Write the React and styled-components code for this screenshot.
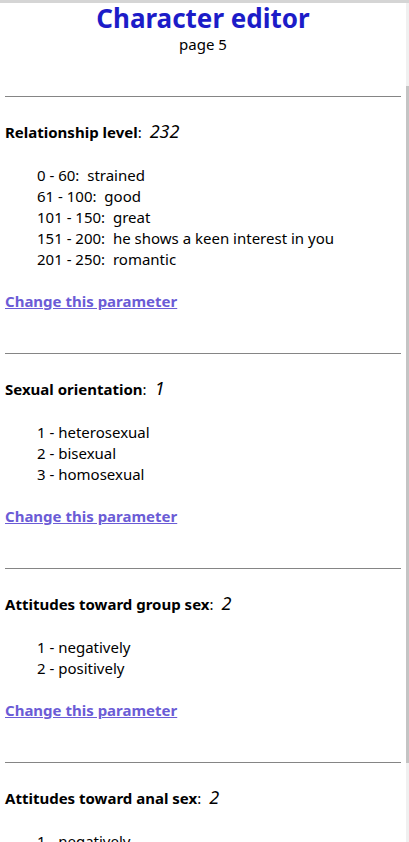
import React from 'react'
import styled, { createGlobalStyle } from 'styled-components'

const GlobalStyle = createGlobalStyle`
  html, body {
    margin: 0;
    padding: 0;
    height: 100%;
    overflow: hidden;
    background: #ffffff;
  }
  body {
    font-family: "Noto Sans", "Open Sans", Arial, sans-serif;
    color: #000000;
  }
`

const Frame = styled.div`
  height: 100vh;
  display: flex;
  flex-direction: column;
`

const TopBar = styled.div`
  height: 3px;
  flex: none;
  background: #d5d5d5;
`

const Body = styled.div`
  flex: 1;
  min-height: 0;
  display: flex;
`

const Content = styled.main`
  flex: 1;
  overflow: hidden;
  padding: 0 5px;
`

const ScrollTrack = styled.div`
  width: 3px;
  flex: none;
  background: #f0f0f0;
  display: flex;
  flex-direction: column;
`

const ScrollThumb = styled.div`
  margin-top: 83px;
  height: 677px;
  background: #c4c4c4;
`

const Title = styled.h1`
  margin: 0;
  text-align: center;
  font-size: 26px;
  line-height: 31px;
  font-weight: 700;
  color: #1c1cc8;
`

const Subtitle = styled.div`
  text-align: center;
  font-size: 15px;
  line-height: 20px;
`

const Divider = styled.hr`
  margin: ${p => p.$first ? '42px' : '41px'} 0 0;
  border: none;
  height: 1px;
  background: #858585;
`

const Heading = styled.div`
  margin-top: 22px;
  font-size: 15px;
  line-height: 24px;
  white-space: nowrap;

  b {
    font-weight: 700;
  }
`

const Value = styled.i`
  margin-left: 8px;
  font-size: 18px;
`

const Options = styled.ul`
  list-style: none;
  margin: 21px 0 0;
  padding: 0 0 0 32px;
`

const Option = styled.li`
  font-size: 15px;
  line-height: 21px;
  white-space: pre;
`

const ChangeLink = styled.a`
  display: inline-block;
  margin-top: 21px;
  font-size: 15px;
  line-height: 20px;
  font-weight: 700;
  color: #6b5cd6;
  text-decoration: underline;
  cursor: pointer;
`

const params = [
  {
    name: 'Relationship level',
    value: '232',
    options: [
      '0 - 60:  strained',
      '61 - 100:  good',
      '101 - 150:  great',
      '151 - 200:  he shows a keen interest in you',
      '201 - 250:  romantic',
    ],
  },
  {
    name: 'Sexual orientation',
    value: '1',
    options: ['1 - heterosexual', '2 - bisexual', '3 - homosexual'],
  },
  {
    name: 'Attitudes toward group sex',
    value: '2',
    options: ['1 - negatively', '2 - positively'],
  },
  {
    name: 'Attitudes toward anal sex',
    value: '2',
    options: ['1 - negatively', '2 - positively'],
  },
]

const Parameter = ({ name, value, options, first }) => (
  <section>
    <Divider $first={first} />
    <Heading>
      <b>{name}</b>:<Value>{value}</Value>
    </Heading>
    <Options>
      {options.map(o => <Option key={o}>{o}</Option>)}
    </Options>
    <ChangeLink>Change this parameter</ChangeLink>
  </section>
)

export default function App() {
  return (
    <>
      <GlobalStyle />
      <Frame>
        <TopBar />
        <Body>
          <Content>
            <Title>Character editor</Title>
            <Subtitle>page 5</Subtitle>
            {params.map((p, i) => <Parameter key={p.name} {...p} first={i === 0} />)}
          </Content>
          <ScrollTrack>
            <ScrollThumb />
          </ScrollTrack>
        </Body>
      </Frame>
    </>
  )
}
